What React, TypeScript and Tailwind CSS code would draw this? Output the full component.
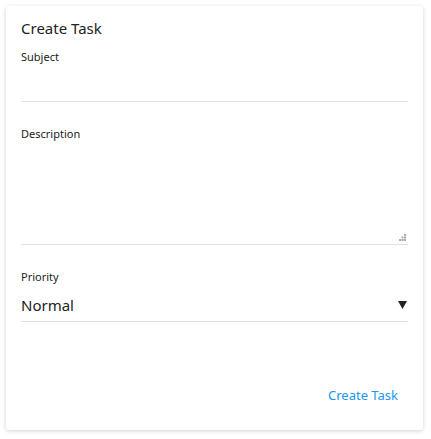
export default function App() {
  return (
    <div className="w-[431px] h-[439px] bg-white p-[6px] pb-[9px]" style={{ fontFamily: '"Noto Sans", "Open Sans", sans-serif' }}>
      <div className="h-full w-[417px] rounded-[3px] shadow-[0_1px_4px_rgba(0,0,0,0.18)] px-[15px] pt-[12px] flex flex-col text-[#222]">
        <div className="text-[15px] leading-[20px]">Create Task</div>
        <div className="text-[11px] leading-[15px] mt-[11px]">Subject</div>
        <div className="h-[38px] border-b border-[#e0e0e0]"></div>
        <div className="text-[11px] leading-[15px] mt-[24px]">Description</div>
        <div className="relative h-[104px] border-b border-[#e0e0e0]">
          <svg className="absolute right-[2px] bottom-[3px]" width="7" height="7" viewBox="0 0 7 7" fill="#aaa">
            <rect x="5" y="0" width="2" height="2" />
            <rect x="2.5" y="2.5" width="2" height="2" />
            <rect x="5" y="2.5" width="2" height="2" />
            <rect x="0" y="5" width="2" height="2" />
            <rect x="2.5" y="5" width="2" height="2" />
            <rect x="5" y="5" width="2" height="2" />
          </svg>
        </div>
        <div className="text-[11px] leading-[15px] mt-[24px]">Priority</div>
        <div className="flex items-end justify-between h-[38px] pb-[6px] border-b border-[#e0e0e0]">
          <span className="text-[15px] leading-[20px]">Normal</span>
          <svg width="9" height="8" viewBox="0 0 9 8" className="mr-[1px] mb-[6px]"><path d="M0 0h9L4.5 8z" fill="#222" /></svg>
        </div>
        <div className="flex justify-end mt-[64px] pr-[10px]">
          <span className="text-[13px] text-[#2196f3]">Create Task</span>
        </div>
      </div>
    </div>
  );
}
